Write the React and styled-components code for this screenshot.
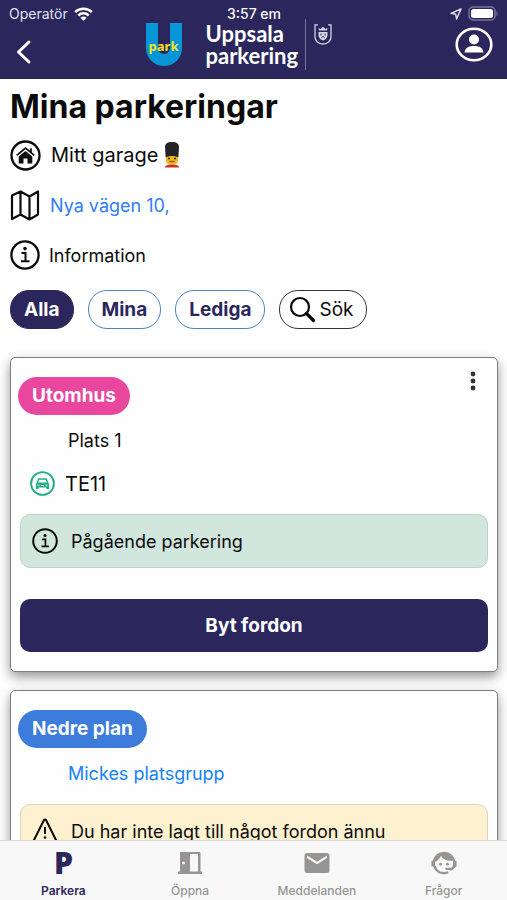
import React from "react"
import styled, { createGlobalStyle } from "styled-components"
import { MdEmail } from "react-icons/md"

const GlobalStyle = createGlobalStyle`
  * {
    box-sizing: border-box;
  }
  body {
    margin: 0;
    background: #fff;
    color: #0b0b0b;
    font-family: Inter, "Liberation Sans", sans-serif;
  }
  button {
    font-family: inherit;
    cursor: pointer;
  }
  svg {
    display: block;
    flex: none;
  }
`
const Page = styled.div`
  display: flex;
  flex-direction: column;
  height: 100vh;
  overflow: hidden;
`
const Header = styled.header`
  flex: none;
  background: #2b275d;
  color: #fff;
`
const StatusBar = styled.div`
  display: grid;
  grid-template-columns: 1fr auto 1fr;
  align-items: center;
  padding: 5px 8px 0 9px;
  font-size: 14px;
  line-height: 17px;
`
const StatusGroup = styled.div`
  display: flex;
  align-items: center;
  justify-content: ${({ $end }) => ($end ? "flex-end" : "flex-start")};
  gap: 6px;
  color: #e4e2f0;
`
const StatusTime = styled.div`
  font-weight: 500;
`
const Nav = styled.nav`
  display: grid;
  grid-template-columns: 1fr auto 1fr;
  align-items: center;
  height: 57px;
  padding: 0 14px 12px;
`
const IconButton = styled.button`
  padding: 0;
  border: 0;
  background: none;
  color: inherit;
  justify-self: ${({ $end }) => ($end ? "end" : "start")};
`
const BackButton = styled(IconButton)`
  padding-top: 14px;
`
const Brand = styled.div`
  display: flex;
  align-items: center;
  height: 45px;
  padding-right: 30px;
`
const UMark = styled.div`
  display: flex;
  align-items: center;
  justify-content: center;
  width: 36px;
  height: 43px;
  border: 12px solid #0795d8;
  border-top: 0;
  border-radius: 0 0 18px 18px;
  color: #f5e51b;
  font: 700 13px/18px "Noto Sans", sans-serif;
  padding-top: 14px;
`
const BrandName = styled.div`
  width: 91px;
  margin-left: 24px;
  font: 700 22px/22px Lato, sans-serif;
`
const Divider = styled.div`
  width: 1px;
  height: 51px;
  margin: 0 8px;
  background: #77749a;
`
const Shield = styled.svg`
  margin-bottom: 20px;
`
const Main = styled.main`
  flex: 1;
  min-height: 0;
  overflow: hidden;
  padding: 10px 9px 0 10px;
`
const Title = styled.h1`
  margin: 0 0 5px;
  font-size: 32px;
  font-weight: 700;
  line-height: 36px;
`
const InfoRow = styled.div`
  display: flex;
  align-items: center;
  gap: ${({ $gap }) => $gap || 10}px;
  height: 50px;
  font-size: ${({ $size }) => $size || 18}px;
`
const GarageName = styled.span`
  display: flex;
  align-items: center;
  gap: 5px;
`
const Link = styled.a`
  color: ${({ $color }) => $color || "#2f7df6"};
  text-decoration: none;
`
const Filters = styled.div`
  display: flex;
  gap: 14px;
  margin: 10px 0 28px;
`
const Pill = styled.button`
  height: 39px;
  padding: 0 13px;
  border: 1px solid ${({ $active }) => ($active ? "#2b275d" : "#4a84c4")};
  border-radius: 19px;
  background: ${({ $active }) => ($active ? "#2b275d" : "#fff")};
  color: ${({ $active }) => ($active ? "#fff" : "#2b275d")};
  font-size: 19px;
  font-weight: 700;
`
const SearchPill = styled(Pill)`
  display: flex;
  align-items: center;
  gap: 3px;
  padding: 0 13px 0 9px;
  border-color: #333;
  color: #0b0b0b;
  font-weight: 400;
`
const Card = styled.section`
  position: relative;
  margin-bottom: 18px;
  padding: 19px 7px;
  border: 1px solid #7d7d7d;
  border-radius: 5px;
  background: #fefefe;
  box-shadow: 0 5px 12px rgba(0, 0, 0, 0.42);
`
const Menu = styled.button`
  position: absolute;
  top: 12px;
  right: 16px;
  padding: 0;
  border: 0;
  background: none;
  color: #333;
`
const Badge = styled.h2`
  width: fit-content;
  margin: 0 0 4px;
  padding: 0 14px;
  border-radius: 19px;
  background: ${({ $color }) => $color};
  color: #fff;
  font-size: 19px;
  font-weight: 700;
  line-height: 38px;
`
const SpotName = styled.div`
  display: flex;
  align-items: center;
  height: 43px;
  padding-left: 50px;
  font-size: 18px;
`
const Vehicle = styled.div`
  display: flex;
  align-items: center;
  gap: 10px;
  height: 43px;
  padding-left: 12px;
  font-size: 20px;
`
const Alert = styled.div`
  display: flex;
  align-items: center;
  gap: 13px;
  height: 54px;
  margin: 9px 2px 0;
  padding: 0 11px;
  border: 1px solid ${({ $warning }) => ($warning ? "#dcd5bd" : "#bcd3c8")};
  border-radius: 10px;
  background: ${({ $warning }) => ($warning ? "#fdf1d0" : "#d1e6dd")};
  font-size: 18px;
`
const Actions = styled.div`
  display: flex;
  padding: 31px 2px 0;
`
const MainButton = styled.button`
  flex: 1;
  height: 53px;
  border: 0;
  border-radius: 10px;
  background: #2b275d;
  color: #fff;
  font-size: 19px;
  font-weight: 700;
`
const TabBar = styled.nav`
  display: grid;
  grid-template-columns: repeat(4, 1fr);
  flex: none;
  height: 60px;
  border-top: 1px solid #d8d8d8;
  background: #f8f8f8;
`
const Tab = styled.a`
  display: flex;
  flex-direction: column;
  align-items: center;
  padding-top: 8px;
  color: ${({ $active }) => ($active ? "#2b275d" : "#969593")};
  font-size: 12px;
  font-weight: ${({ $active }) => ($active ? 600 : 500)};
  line-height: 16px;
  text-decoration: none;
`
const TabIcon = styled.div`
  display: flex;
  align-items: center;
  justify-content: center;
  height: 28px;
  margin-bottom: 6px;
`
const ParkingLetter = styled.span`
  font: 800 30px/28px "Open Sans", sans-serif;
`

const InfoIcon = ({ size }) => (
  <svg width={size} height={size} viewBox="0 0 30 30" fill="none" stroke="currentColor" strokeWidth="2.3">
    <circle cx="15" cy="15" r="13.6" />
    <path d="M11.5 13h4v8M11 21.3h8.5" strokeWidth="2" />
    <circle cx="15" cy="8.6" r="1.8" fill="currentColor" stroke="none" />
  </svg>
)
const HomeIcon = () => (
  <svg width="31" height="31" viewBox="0 0 31 31" fill="none" stroke="currentColor">
    <circle cx="15.5" cy="15.5" r="14" strokeWidth="2.3" />
    <path d="M6.7 15.4 15.5 8l8.8 7.4M21 8.2v4" strokeWidth="1.7" />
    <path d="M15.5 11 8.700 16.500V23.500h4.800v-5h4v5h4.800v-7z" fill="currentColor" stroke="none" />
  </svg>
)
const GuardIcon = () => (
  <svg width="18" height="26" viewBox="0 0 18 26">
    <path d="M3 14h12v5c0 2-2.5 4-6 4s-6-2-6-4z" fill="#efb91e" />
    <path d="M2 5c0-3 2-5 7-5s7 2 7 5l-.7 10.500C12 13.500 6 13.500 2.700 15.500z" fill="#242426" />
    <path d="M5 16.500h2M11 16.500h2" stroke="#3e2b13" strokeWidth="1.4" />
    <path d="M6.500 19.500h5" stroke="#8c3a12" strokeWidth="1.2" />
    <path d="M2 25.500c0-2 2-2.500 4.500-2.700h5c2.500.2 4.500.7 4.500 2.700z" fill="#c9302b" />
  </svg>
)
const MapIcon = () => (
  <svg width="30" height="31" viewBox="0 0 30 31" fill="none" stroke="currentColor" strokeWidth="2.2" strokeLinejoin="round">
    <path d="M2 5.500 10.500 1.500l9 5 8.500-5v23l-8.500 5-9-5L2 29zM10.500 1.500v23M19.500 6.500v23" />
  </svg>
)
const SearchIcon = () => (
  <svg width="27" height="27" viewBox="0 0 27 27" fill="none" stroke="currentColor">
    <circle cx="11" cy="11" r="9" strokeWidth="2.2" />
    <path d="m17.500 17.500 7 7" strokeWidth="3.2" strokeLinecap="round" />
  </svg>
)
const CarIcon = () => (
  <svg width="25" height="25" viewBox="0 0 25 25" fill="none" stroke="#1eae80">
    <circle cx="12.5" cy="12.5" r="11.4" strokeWidth="1.9" />
    <path d="M7.200 12 8.800 8h7.400l1.600 4" strokeWidth="1.5" />
    <path d="M6 13c0-1 .8-1.600 1.700-1.600h9.600c.9 0 1.700.6 1.700 1.600v5h-2.500v-1.500h-8V18H6z" fill="#1eae80" stroke="none" />
    <path d="M7.500 14.200h2M15.500 14.200h2M11 14.600h3" stroke="#e9f8f2" strokeWidth="1" />
  </svg>
)
const WarningIcon = () => (
  <svg width="26" height="26" viewBox="0 0 26 26" fill="none" stroke="currentColor" strokeWidth="2" strokeLinejoin="round">
    <path d="M12 2c.5-.8 1.500-.8 2 0L25 24H1z" />
    <path d="M13 9v7" />
    <circle cx="13" cy="19.5" r="1.3" fill="currentColor" stroke="none" />
  </svg>
)
const WifiIcon = () => (
  <svg width="19" height="14" viewBox="0 0 19 14" fill="none" stroke="#fff" strokeWidth="2.5">
    <path d="M1.200 5.200a11.800 11.800 0 0 1 16.600 0M4.300 8.500a7.400 7.400 0 0 1 10.400 0" />
    <path d="M9.500 13.800 6.400 10.700a4.400 4.400 0 0 1 6.200 0z" fill="#fff" stroke="none" />
  </svg>
)
const LocationIcon = () => (
  <svg width="12" height="12" viewBox="0 0 12 12" fill="none" stroke="#e4e2f0" strokeWidth="1.4" strokeLinejoin="round">
    <path d="M11 1 1 5.300l4.700.9.9 4.800z" />
  </svg>
)
const BatteryIcon = () => (
  <svg width="31" height="15" viewBox="0 0 31 15">
    <rect x="1" y="1" width="26" height="13" rx="4" fill="none" stroke="#77749a" strokeWidth="1.5" />
    <rect x="3" y="3" width="22" height="9" rx="2.5" fill="#fff" />
    <path d="M28.500 5c1.500.5 1.500 4.500 0 5z" fill="#77749a" />
  </svg>
)
const BackIcon = () => (
  <svg width="18" height="26" viewBox="0 0 18 26" fill="none" stroke="#fff" strokeWidth="3" strokeLinecap="round" strokeLinejoin="round">
    <path d="M15 3 4.500 13 15 23" />
  </svg>
)
const ProfileIcon = () => (
  <svg width="38" height="35" viewBox="0 0 38 35" fill="none">
    <ellipse cx="19" cy="17.5" rx="17.3" ry="15.7" stroke="#fff" strokeWidth="2.6" />
    <circle cx="19" cy="12.5" r="5" fill="#fff" />
    <path d="M9.500 25.500c.5-4.500 4-6.500 9.500-6.500s9 2 9.500 6.500z" fill="#fff" />
  </svg>
)
const CrestIcon = () => (
  <Shield width="18" height="21" viewBox="0 0 18 21" fill="none" stroke="#d5d3e4">
    <path d="M4 .8H1V13c0 4 3.500 7 8 7s8-3 8-7V.8h-3" strokeWidth="1.3" />
    <path d="M4.500 8h9v3c0 3-2 4.500-4.500 5.500C6.500 15.500 4.500 14 4.500 11z" fill="#d5d3e4" stroke="none" />
    <path d="M5 6.500 4.500 4l2 1L9 2.800l2.500 2.200 2-1-.5 2.500z" fill="#d5d3e4" stroke="none" />
    <path d="M7 9.500v2M11 9.500v2M7.500 13.500 9 12.500l1.500 1" stroke="#2b275d" />
  </Shield>
)
const DotsIcon = () => (
  <svg width="16" height="22" viewBox="0 0 16 22" fill="currentColor">
    <circle cx="8" cy="4" r="2.4" />
    <circle cx="8" cy="11" r="2.4" />
    <circle cx="8" cy="18" r="2.4" />
  </svg>
)
const DoorIcon = () => (
  <svg width="26" height="24" viewBox="0 0 26 24" fill="currentColor">
    <path d="M3 1h10v20H3z" />
    <path d="M13 1h9c1 0 1.500.5 1.500 1.500V21H21V3h-8z" />
    <path d="M1 20.500h24V23H1z" />
    <circle cx="6.5" cy="12" r="1.5" fill="#f8f8f8" />
  </svg>
)
const AgentIcon = () => (
  <svg width="30" height="30" viewBox="0 0 24 24" fill="currentColor">
    <path d="M18.720 14.760C19.070 13.910 19.260 13 19.260 12C19.260 11.280 19.150 10.590 18.960 9.950C18.310 10.100 17.630 10.180 16.920 10.180C13.860 10.180 11.150 8.670 9.500 6.340C8.610 8.500 6.910 10.260 4.770 11.220C4.730 11.470 4.730 11.740 4.730 12A7.270 7.270 0 0 0 12 19.270C13.050 19.270 14.060 19.040 14.970 18.630C15.540 19.720 15.800 20.260 15.780 20.260C14.140 20.810 12.870 21.080 12 21.080C9.580 21.080 7.270 20.130 5.570 18.420C4.530 17.380 3.760 16.110 3.330 14.730H2V10.180H3.090C3.930 6.040 7.600 2.920 12 2.920C14.400 2.920 16.710 3.870 18.420 5.580C19.690 6.840 20.540 8.450 20.890 10.180H22V14.730H21.940L18.380 18L13.080 17.400V15.730H17.910Z" />
    <circle cx="9.27" cy="12.91" r="1.14" />
    <circle cx="14.72" cy="12.91" r="1.14" />
  </svg>
)

const tabs = [
  { name: "Parkera", icon: <ParkingLetter>P</ParkingLetter>, active: true },
  { name: "Öppna", icon: <DoorIcon /> },
  { name: "Meddelanden", icon: <MdEmail size={30} /> },
  { name: "Frågor", icon: <AgentIcon /> },
]

const App = () => {
  const tabItems = tabs.map((item) => (
    <Tab key={item.name} href="#" $active={item.active}>
      <TabIcon>{item.icon}</TabIcon>
      {item.name}
    </Tab>
  ))
  return (
    <Page>
      <GlobalStyle />
      <Header>
        <StatusBar>
          <StatusGroup>
            Operatör
            <WifiIcon />
          </StatusGroup>
          <StatusTime>3:57 em</StatusTime>
          <StatusGroup $end>
            <LocationIcon />
            <BatteryIcon />
          </StatusGroup>
        </StatusBar>
        <Nav>
          <BackButton aria-label="Tillbaka">
            <BackIcon />
          </BackButton>
          <Brand>
            <UMark>park</UMark>
            <BrandName>
              Uppsala
              <br />
              parkering
            </BrandName>
            <Divider />
            <CrestIcon />
          </Brand>
          <IconButton $end aria-label="Profil">
            <ProfileIcon />
          </IconButton>
        </Nav>
      </Header>
      <Main>
        <Title>Mina parkeringar</Title>
        <InfoRow $size={20}>
          <HomeIcon />
          <GarageName>
            Mitt garage
            <GuardIcon />
          </GarageName>
        </InfoRow>
        <InfoRow>
          <MapIcon />
          <Link href="#">Nya vägen 10,</Link>
        </InfoRow>
        <InfoRow $gap={9}>
          <InfoIcon size={30} />
          Information
        </InfoRow>
        <Filters>
          <Pill $active>Alla</Pill>
          <Pill>Mina</Pill>
          <Pill>Lediga</Pill>
          <SearchPill>
            <SearchIcon />
            Sök
          </SearchPill>
        </Filters>
        <Card>
          <Menu aria-label="Meny">
            <DotsIcon />
          </Menu>
          <Badge $color="#e9479e">Utomhus</Badge>
          <SpotName>Plats 1</SpotName>
          <Vehicle>
            <CarIcon />
            TE11
          </Vehicle>
          <Alert>
            <InfoIcon size={26} />
            Pågående parkering
          </Alert>
          <Actions>
            <MainButton>Byt fordon</MainButton>
          </Actions>
        </Card>
        <Card>
          <Badge $color="#3d7cdb">Nedre plan</Badge>
          <SpotName>
            <Link href="#" $color="#1583f5">Mickes platsgrupp</Link>
          </SpotName>
          <Alert $warning>
            <WarningIcon />
            Du har inte lagt till något fordon ännu
          </Alert>
        </Card>
      </Main>
      <TabBar>{tabItems}</TabBar>
    </Page>
  )
}

export default App
